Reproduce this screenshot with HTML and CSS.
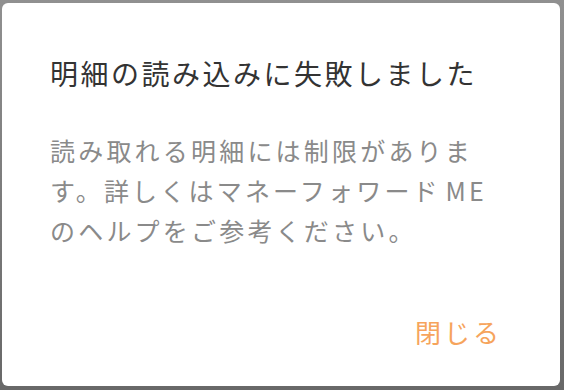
FILE: index.html
```html
<!DOCTYPE html>
<html lang="ja">
<head>
    <meta charset="UTF-8">
    <meta name="viewport" content="width=device-width, initial-scale=1.0">
    <title>明細の読み込みに失敗しました</title>
    <link rel="stylesheet" href="styles.css">
</head>
<body>
    <div class="dialog">
        <h1 class="dialog-title">明細の読み込みに失敗しました</h1>
        <p class="dialog-message">読み取れる明細には制限があります。詳しくはマネーフォワード ME のヘルプをご参考ください。</p>
        <div class="dialog-actions">
            <button class="close-btn">閉じる</button>
        </div>
    </div>
</body>
</html>
```

FILE: styles.css
```css
html, body {
    height: 100%;
}

body {
    margin: 0;
    padding: 3px 4px 4px 2px;
    box-sizing: border-box;
    background: linear-gradient(#909090, #686868);
    font-family: "Noto Sans CJK JP", sans-serif;
    overflow: hidden;
}

.dialog {
    height: 100%;
    box-sizing: border-box;
    background-color: #fff;
    border-radius: 6px;
    padding: 50px 0 0 48px;
    display: flex;
    flex-direction: column;
}

.dialog-title {
    margin: 0;
    font-size: 28px;
    font-weight: normal;
    line-height: 40px;
    letter-spacing: 2.5px;
    color: #333;
}

.dialog-message {
    margin: 37px 0 0;
    width: 446px;
    font-size: 25px;
    line-height: 40px;
    letter-spacing: 3.2px;
    word-spacing: -4px;
    color: #8a8a8a;
}

.dialog-actions {
    margin-top: auto;
    padding: 0 58px 36px 0;
    display: flex;
    justify-content: flex-end;
}

.close-btn {
    padding: 0;
    border: none;
    background: none;
    font-family: inherit;
    font-size: 26px;
    letter-spacing: 3px;
    color: #f6a45c;
    cursor: pointer;
}
```
